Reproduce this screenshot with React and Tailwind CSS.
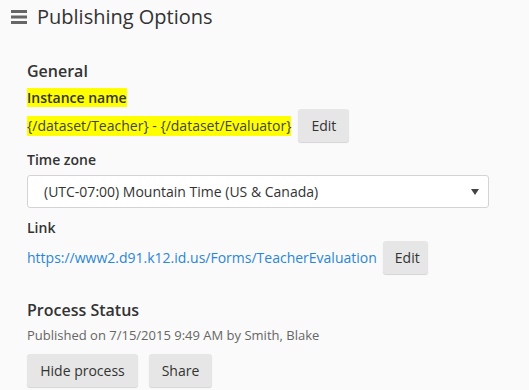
import React from 'react';

const MenuBars = () => (
    <svg width="16" height="16" viewBox="0 0 16 16" className="text-[#666]">
        <rect x="0" y="1" width="16" height="3" fill="currentColor" />
        <rect x="0" y="6.5" width="16" height="3" fill="currentColor" />
        <rect x="0" y="12" width="16" height="3" fill="currentColor" />
    </svg>
);

const Btn = ({ children, className = '' }) => (
    <button className={`h-[33px] px-3 rounded-[3px] bg-[#e6e6e6] text-[#333] text-[14px] shadow-[0_1px_1px_rgba(0,0,0,0.15)] ${className}`}>
        {children}
    </button>
);

export default function App() {
    return (
        <div className="w-[529px] h-[390px] overflow-hidden bg-[#fafafa] text-[#333] font-['Open_Sans',sans-serif]">
            {/* header */}
            <div className="flex items-center h-[34px] pl-[11px] gap-[10px]">
                <MenuBars />
                <h1 className="text-[20px] leading-none text-[#333] mt-[-1px]">Publishing Options</h1>
            </div>

            <div className="pl-[27px] pt-[26px]">
                <h2 className="text-[16px] font-semibold leading-[22px] text-[#333]">General</h2>

                <div className="mt-[6px] text-[14px] font-semibold leading-[19px]">
                    <span className="bg-[#ffff00]">Instance name</span>
                </div>
                <div className="mt-[2px] flex items-center gap-[7px]">
                    <span className="bg-[#ffff00] text-[14px] leading-[20px] text-[#444]">{'{/dataset/Teacher} - {/dataset/Evaluator}'}</span>
                    <Btn className="w-[51px]">Edit</Btn>
                </div>

                <div className="mt-[8px] text-[14px] font-semibold leading-[19px]">Time zone</div>
                <div className="mt-[6px] w-[462px] h-[33px] flex items-center justify-between pl-[16px] pr-[9px] bg-white border border-[#d4d4d4] rounded-[3px]">
                    <span className="text-[14px] text-[#333]">(UTC-07:00) Mountain Time (US &amp; Canada)</span>
                    <svg width="8" height="6" viewBox="0 0 8 6"><path d="M0 0h8L4 6z" fill="#444" /></svg>
                </div>

                <div className="mt-[10px] text-[14px] font-semibold leading-[19px]">Link</div>
                <div className="mt-[4px] flex items-center gap-[6px]">
                    <a href="#" className="text-[14px] leading-[20px] text-[#2a86d6]">https://www2.d91.k12.id.us/Forms/TeacherEvaluation</a>
                    <Btn className="w-[45px]">Edit</Btn>
                </div>

                <h2 className="mt-[25px] text-[16px] font-semibold leading-[22px] text-[#333]">Process Status</h2>
                <div className="mt-[5px] text-[13px] leading-[18px] text-[#666]">Published on 7/15/2015 9:49 AM by Smith, Blake</div>
                <div className="mt-[10px] flex gap-[11px]">
                    <Btn className="w-[111px]">Hide process</Btn>
                    <Btn className="w-[63px]">Share</Btn>
                </div>
            </div>
        </div>
    );
}
